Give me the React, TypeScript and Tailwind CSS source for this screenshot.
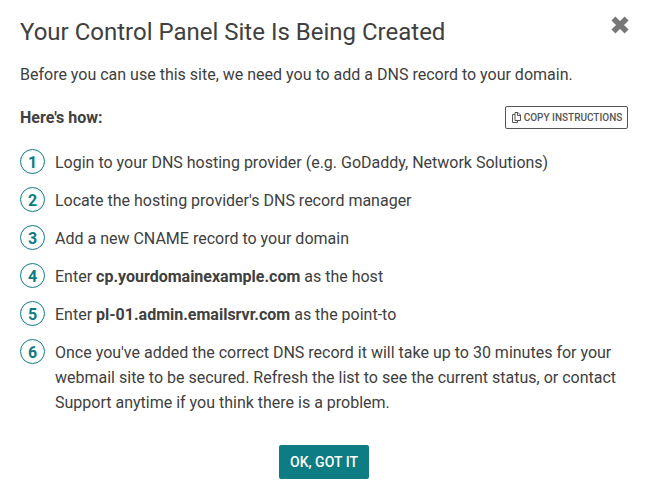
import React from "react";

const steps: React.ReactNode[] = [
  "Login to your DNS hosting provider (e.g. GoDaddy, Network Solutions)",
  "Locate the hosting provider's DNS record manager",
  "Add a new CNAME record to your domain",
  <>Enter <b>cp.yourdomainexample.com</b> as the host</>,
  <>Enter <b>pl-01.admin.emailsrvr.com</b> as the point-to</>,
  <>Once you've added the correct DNS record it will take up to 30 minutes for your<br />webmail site to be secured. Refresh the list to see the current status, or contact<br />Support anytime if you think there is a problem.</>,
];

export default function App() {
  return (
    <main className="h-[499px] w-[647px] overflow-hidden bg-white px-5 pt-4 font-['Roboto',sans-serif] text-base text-[#404040]">
      <header className="flex h-8 items-start justify-between">
        <h1 className="whitespace-nowrap text-2xl leading-8">Your Control Panel Site Is Being Created</h1>
        <button aria-label="Close" className="-mr-0.5">
          <svg width="18" height="18" viewBox="0 0 18 18" fill="none" stroke="#777" strokeWidth="5.6" strokeLinecap="square"><path d="M4.4 4.4l9.2 9.2M13.6 4.4L4.4 13.6" /></svg>
        </button>
      </header>
      <p className="mt-[14px] whitespace-nowrap leading-[25px]">Before you can use this site, we need you to add a DNS record to your domain.</p>
      <div className="mt-[18px] flex h-[25px] items-center justify-between">
        <h2 className="font-bold">Here's how:</h2>
        <button className="-mr-px flex h-[23px] w-[123px] items-center justify-center gap-[3px] whitespace-nowrap rounded-xs border border-[#555] pl-px text-[10px] font-medium text-[#555]">
          <svg className="mb-px" width="9" height="11" viewBox="0 0 9 11" fill="none" stroke="#555"><path d="M3 .5h3L8.5 3v5.5H3zM5.5 .5v3h3M3 2.5H.5v8h5v-2" /></svg>
          COPY INSTRUCTIONS
        </button>
      </div>
      <ol className="mt-5 flex flex-col gap-[13px]">
        {steps.map((s, i) => (
          <li key={i} className="flex gap-[10px] leading-[25px]">
            <span className="-mt-px flex size-[25px] shrink-0 items-center justify-center rounded-full border border-[#0d7c83] pt-0.5 font-bold text-[#0d7c83]">{i + 1}</span>
            <span className="whitespace-nowrap">{s}</span>
          </li>
        ))}
      </ol>
      <div className="mt-[30px] flex justify-center">
        <button className="h-[34px] w-[90px] whitespace-nowrap rounded-xs bg-[#0d7c83] pl-px text-sm font-medium text-white">OK, GOT IT</button>
      </div>
    </main>
  );
}
